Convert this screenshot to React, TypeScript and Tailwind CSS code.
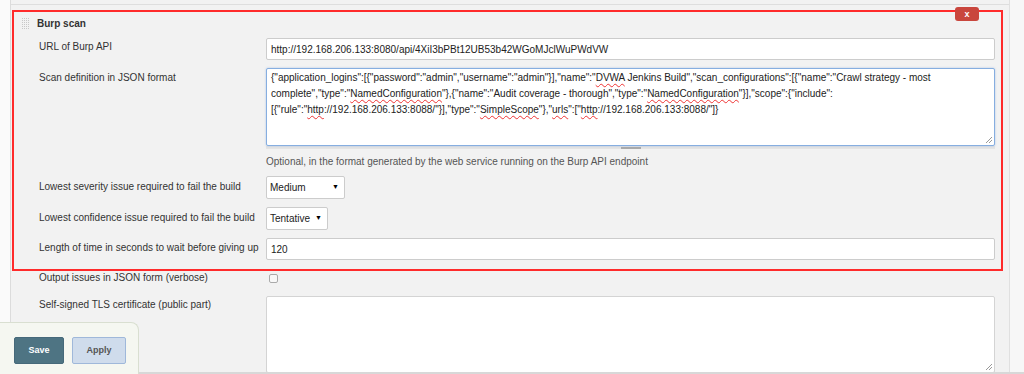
const font = { fontFamily: '"Liberation Sans", Arial, sans-serif' }

function Spell({ children }: { children: string }) {
  return <span className="underline decoration-wavy decoration-[#e33] decoration-1 underline-offset-[2px]">{children}</span>
}

function DragHandle() {
  const dots = []
  for (let r = 0; r < 6; r++) {
    for (let c = 0; c < 4; c++) {
      dots.push(<rect key={`${r}-${c}`} x={c * 2} y={r * 2} width={1} height={1} fill="#c8c8c8" />)
    }
  }
  return (
    <svg width="8" height="12" viewBox="0 0 8 12" className="shrink-0">
      {dots}
    </svg>
  )
}

function ResizeGrip() {
  return (
    <svg width="8" height="8" viewBox="0 0 8 8" className="absolute right-[1px] bottom-[1px]">
      <path d="M7 1 L1 7 M7 4 L4 7" stroke="#999" strokeWidth="1" />
    </svg>
  )
}

function Select({ value, width }: { value: string; width: string }) {
  return (
    <div className={`${width} shrink-0 h-[23px] bg-white border border-[#ccc] rounded-[2px] flex items-center justify-between pl-[3px] pr-[5px] text-[10px] text-[#222]`}>
      <span>{value}</span>
      <span className="text-[7px] text-black">▼</span>
    </div>
  )
}

const label = 'w-[227px] shrink-0 whitespace-nowrap text-[10px] leading-[14px]'

export default function App() {
  return (
    <div className="w-[1024px] h-[374px] overflow-hidden relative flex bg-[#f8f8f8] text-[#333]" style={font}>
      {/* left gutter */}
      <div className="w-[11px] h-full bg-[#fafafa] border-r border-[#dcdcdc]" />

      {/* main column */}
      <div className="w-[999px] h-full bg-[#f2f2f2] border-r border-[#e0e0e0] flex flex-col">
        <div className="h-[5px] border-b border-[#dedede] shrink-0" />

        {/* highlighted section */}
        <div className="relative mt-[5px] ml-[1px] w-[991px] border-2 border-[#ff2b2b] pb-[9px]">
          <div className="absolute right-[22px] top-[-5px] w-[24px] h-[14px] bg-[#c9463d] rounded-[3px] flex items-center justify-center text-white text-[9px] font-bold leading-none">
            x
          </div>

          <div className="flex items-center pl-[8px] pt-[5px] gap-[7px] h-[19px]">
            <DragHandle />
            <span className="text-[10px] font-bold leading-[14px] text-[#333]">Burp scan</span>
          </div>

          <div className="flex mt-[7px] pl-[25px] pr-[6px]">
            <div className={`${label} pt-[2px]`}>URL of Burp API</div>
            <div className="flex-1 h-[22px] bg-white border border-[#ccc] rounded-[2px] flex items-center px-[4px] text-[10px] text-[#222]">
              http://192.168.206.133:8080/api/4XiI3bPBt12UB53b42WGoMJclWuPWdVW
            </div>
          </div>

          <div className="flex mt-[8px] pl-[25px] pr-[6px]">
            <div className={`${label} pt-[3px]`}>Scan definition in JSON format</div>
            <div className="flex-1 flex flex-col">
              <div className="relative h-[78px] bg-white border border-[#86aee0] rounded-[2px] shadow-[0_0_2px_rgba(100,150,220,0.5)] px-[4px] pt-[1px] text-[10px] leading-[16px] text-[#222] whitespace-nowrap overflow-hidden">
                <div>
                  {'{"application_logins":[{"password":"admin","username":"admin"}],"name":"'}
                  <Spell>DVWA</Spell>
                  {' Jenkins Build","scan_configurations":[{"name":"Crawl strategy - most'}
                </div>
                <div>
                  {'complete","type":"'}
                  <Spell>NamedConfiguration</Spell>
                  {'"},{"name":"Audit coverage - thorough","type":"'}
                  <Spell>NamedConfiguration</Spell>
                  {'"}],"scope":{"include":'}
                </div>
                <div>
                  {'[{"rule":"'}
                  <Spell>http</Spell>
                  {'://192.168.206.133:8088/"}],"type":"'}
                  <Spell>SimpleScope</Spell>
                  {'"},"'}
                  <Spell>urls</Spell>
                  {'":["'}
                  <Spell>http</Spell>
                  {'://192.168.206.133:8088/"]}'}
                </div>
                <ResizeGrip />
              </div>
              <div className="h-[3px] bg-[#e4e4e4] flex justify-center items-center">
                <div className="w-[20px] h-[2px] bg-[#aaa]" />
              </div>
              <div className="mt-[6px] text-[10px] leading-[14px] text-[#555]">
                Optional, in the format generated by the web service running on the Burp API endpoint
              </div>
            </div>
          </div>

          <div className="flex mt-[7px] pl-[25px] pr-[6px]">
            <div className={`${label} pt-[4px]`}>Lowest severity issue required to fail the build</div>
            <Select value="Medium" width="w-[79px]" />
          </div>

          <div className="flex mt-[8px] pl-[25px] pr-[6px]">
            <div className={`${label} pt-[4px]`}>Lowest confidence issue required to fail the build</div>
            <Select value="Tentative" width="w-[62px]" />
          </div>

          <div className="flex mt-[8px] pl-[25px] pr-[6px]">
            <div className={`${label} pt-[3px]`}>Length of time in seconds to wait before giving up</div>
            <div className="flex-1 h-[22px] bg-white border border-[#ccc] rounded-[2px] flex items-center px-[4px] text-[10px] text-[#222]">
              120
            </div>
          </div>
        </div>

        <div className="flex pl-[28px] pr-[14px]">
          <div className={label}>Output issues in JSON form (verbose)</div>
          <div className="ml-[3px] mt-[3px] w-[9px] h-[9px] bg-[#f8f8f8] border border-[#aaa] rounded-[2px]" />
        </div>

        <div className="flex pl-[28px] pr-[14px] mt-[11px]">
          <div className={`${label} pt-[2px]`}>Self-signed TLS certificate (public part)</div>
          <div className="relative flex-1 h-[77px] bg-white border border-[#d4d4d4] rounded-[2px]">
            <ResizeGrip />
          </div>
        </div>
      </div>

      {/* right gutter */}
      <div className="flex-1 h-full bg-[#f7f7f7]" />

      <div className="absolute left-0 right-0 bottom-0 h-[2px] bg-[#d8d8d8]" />

      {/* floating button bar */}
      <div className="absolute left-0 bottom-0 w-[139px] h-[52px] bg-[#f5f7f1] border-t border-r border-[#d9dfd1] rounded-tr-[8px] flex gap-[8px] pl-[14px] pt-[14px]">
        <div className="w-[50px] h-[27px] bg-[#4e7483] border border-[#46697a] rounded-[2px] flex items-center justify-center text-white text-[9px] font-bold">
          Save
        </div>
        <div className="w-[54px] h-[27px] bg-[#cfdcec] border border-[#9fb8da] rounded-[2px] flex items-center justify-center text-[#555] text-[9px] font-bold">
          Apply
        </div>
      </div>
    </div>
  )
}
